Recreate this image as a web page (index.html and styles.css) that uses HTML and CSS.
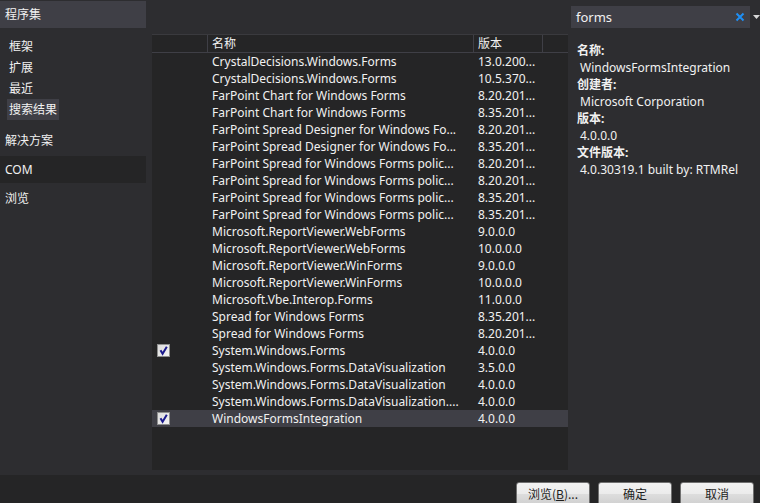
FILE: index.html
```html
<!DOCTYPE html>
<html>
<head>
<meta charset="utf-8">
<link rel="stylesheet" href="styles.css">
</head>
<body>
<div class="app">
  <div class="main">
    <nav class="sidebar">
      <div class="side-head">程序集</div>
      <div class="side-sub">
        <div class="sub-item">框架</div>
        <div class="sub-item">扩展</div>
        <div class="sub-item">最近</div>
        <div class="sub-item active">搜索结果</div>
      </div>
      <div class="side-item">解决方案</div>
      <div class="side-item com">COM</div>
      <div class="side-item">浏览</div>
    </nav>
    <section class="center">
      <div class="list">
        <div class="list-head">
          <div class="c-check"></div>
          <div class="c-name">名称</div>
          <div class="c-ver">版本</div>
          <div class="c-rest"></div>
        </div>
        <div class="rows">
          <div class="row"><div class="c-check"></div><div class="c-name">CrystalDecisions.Windows.Forms</div><div class="c-ver">13.0.200...</div></div>
          <div class="row"><div class="c-check"></div><div class="c-name">CrystalDecisions.Windows.Forms</div><div class="c-ver">10.5.370...</div></div>
          <div class="row"><div class="c-check"></div><div class="c-name">FarPoint Chart for Windows Forms</div><div class="c-ver">8.20.201...</div></div>
          <div class="row"><div class="c-check"></div><div class="c-name">FarPoint Chart for Windows Forms</div><div class="c-ver">8.35.201...</div></div>
          <div class="row"><div class="c-check"></div><div class="c-name">FarPoint Spread Designer for Windows Fo...</div><div class="c-ver">8.20.201...</div></div>
          <div class="row"><div class="c-check"></div><div class="c-name">FarPoint Spread Designer for Windows Fo...</div><div class="c-ver">8.35.201...</div></div>
          <div class="row"><div class="c-check"></div><div class="c-name">FarPoint Spread for Windows Forms polic...</div><div class="c-ver">8.20.201...</div></div>
          <div class="row"><div class="c-check"></div><div class="c-name">FarPoint Spread for Windows Forms polic...</div><div class="c-ver">8.20.201...</div></div>
          <div class="row"><div class="c-check"></div><div class="c-name">FarPoint Spread for Windows Forms polic...</div><div class="c-ver">8.35.201...</div></div>
          <div class="row"><div class="c-check"></div><div class="c-name">FarPoint Spread for Windows Forms polic...</div><div class="c-ver">8.35.201...</div></div>
          <div class="row"><div class="c-check"></div><div class="c-name">Microsoft.ReportViewer.WebForms</div><div class="c-ver">9.0.0.0</div></div>
          <div class="row"><div class="c-check"></div><div class="c-name">Microsoft.ReportViewer.WebForms</div><div class="c-ver">10.0.0.0</div></div>
          <div class="row"><div class="c-check"></div><div class="c-name">Microsoft.ReportViewer.WinForms</div><div class="c-ver">9.0.0.0</div></div>
          <div class="row"><div class="c-check"></div><div class="c-name">Microsoft.ReportViewer.WinForms</div><div class="c-ver">10.0.0.0</div></div>
          <div class="row"><div class="c-check"></div><div class="c-name">Microsoft.Vbe.Interop.Forms</div><div class="c-ver">11.0.0.0</div></div>
          <div class="row"><div class="c-check"></div><div class="c-name">Spread for Windows Forms</div><div class="c-ver">8.35.201...</div></div>
          <div class="row"><div class="c-check"></div><div class="c-name">Spread for Windows Forms</div><div class="c-ver">8.20.201...</div></div>
          <div class="row"><div class="c-check"><span class="cb"><svg viewBox="0 0 13 13" width="13" height="13"><path d="M3.5 6.2 L5.6 9.8 L9.8 2.8" fill="none" stroke="#1a1a8c" stroke-width="2"/></svg></span></div><div class="c-name">System.Windows.Forms</div><div class="c-ver">4.0.0.0</div></div>
          <div class="row"><div class="c-check"></div><div class="c-name">System.Windows.Forms.DataVisualization</div><div class="c-ver">3.5.0.0</div></div>
          <div class="row"><div class="c-check"></div><div class="c-name">System.Windows.Forms.DataVisualization</div><div class="c-ver">4.0.0.0</div></div>
          <div class="row"><div class="c-check"></div><div class="c-name">System.Windows.Forms.DataVisualization....</div><div class="c-ver">4.0.0.0</div></div>
          <div class="row selected"><div class="c-check"><span class="cb"><svg viewBox="0 0 13 13" width="13" height="13"><path d="M3.5 6.2 L5.6 9.8 L9.8 2.8" fill="none" stroke="#1a1a8c" stroke-width="2"/></svg></span></div><div class="c-name">WindowsFormsIntegration</div><div class="c-ver">4.0.0.0</div></div>
        </div>
      </div>
    </section>
    <aside class="details">
      <div class="search">
        <div class="search-box">
          <span class="search-text">forms</span>
          <svg class="clear" viewBox="0 0 10 10" width="10" height="10"><path d="M1.5 1.5 L8.5 8.5 M8.5 1.5 L1.5 8.5" stroke="#1e8ff5" stroke-width="2"/></svg>
        </div>
        <svg class="drop" viewBox="0 0 7 4" width="7" height="4"><path d="M0 0 H7 L3.5 4 Z" fill="#d8d8d8"/></svg>
      </div>
      <dl class="info">
        <dt>名称:</dt>
        <dd>WindowsFormsIntegration</dd>
        <dt>创建者:</dt>
        <dd>Microsoft Corporation</dd>
        <dt>版本:</dt>
        <dd>4.0.0.0</dd>
        <dt>文件版本:</dt>
        <dd>4.0.30319.1 built by: RTMRel</dd>
      </dl>
    </aside>
  </div>
  <footer class="footer">
    <button class="btn">浏览(<u>B</u>)...</button>
    <button class="btn">确定</button>
    <button class="btn">取消</button>
  </footer>
</div>
</body>
</html>
```
FILE: styles.css
```css
* { box-sizing: border-box; }
html, body { margin: 0; padding: 0; }
body {
  width: 760px;
  height: 503px;
  overflow: hidden;
  background: #2d2d30;
  color: #f1f1f1;
  font-family: "Noto Sans", "Noto Sans CJK SC", sans-serif;
  font-size: 12px;
}
.app { display: flex; flex-direction: column; height: 503px; }
.main { display: flex; height: 475px; }

.sidebar { width: 146px; flex: none; padding-top: 1px; }
.side-head {
  height: 27px;
  background: #3f3f46;
  padding-left: 5px;
  line-height: 27px;
}
.side-sub { padding: 8px 0 7px 7px; }
.sub-item {
  height: 21px;
  line-height: 21px;
  padding-left: 2px;
  display: table;
  padding-right: 2px;
}
.sub-item.active { background: #3f3f46; }
.side-item {
  height: 27px;
  line-height: 27px;
  padding-left: 5px;
  margin-bottom: 2px;
}
.side-item.com { background: #252526; }

.center { width: 422px; flex: none; padding: 34px 0 5px 6px; }
.list {
  height: 436px;
  background: #252526;
  border-top: 1px solid #3a3a3e;
}
.list-head {
  display: flex;
  height: 18px;
  border-bottom: 1px solid #3f3f46;
  line-height: 17px;
}
.list-head > div { border-right: 1px solid #3f3f46; }
.c-check { width: 56px; flex: none; display: flex; align-items: center; padding-left: 5px; }
.c-name { width: 266px; flex: none; padding-left: 4px; white-space: nowrap; overflow: hidden; }
.c-ver { width: 69px; flex: none; padding-left: 4px; white-space: nowrap; }
.list-head .c-name { width: 266px; }
.c-rest { width: 25px; border-right: none !important; }
.row { display: flex; height: 17px; line-height: 17px; }
.row.selected { background: #3f3f46; }
.cb {
  width: 13px;
  height: 13px;
  display: block;
  border: 1px solid #8e8f8f;
  background: linear-gradient(135deg, #dcdcdc, #f4f4f4);
  position: relative;
}
.cb svg { position: absolute; left: -1px; top: -1px; }

.details { flex: 1; padding: 6px 0 0 3px; }
.search { display: flex; align-items: center; height: 22px; }
.search-box {
  width: 179px;
  height: 22px;
  background: #3f3f46;
  display: flex;
  align-items: center;
  padding-left: 5px;
  padding-right: 5px;
  font-size: 13px;
}
.search-text { flex: 1; }
.clear { display: block; }
.drop { margin-left: 3px; }
.info { margin: 14px 0 0 6px; line-height: 17px; }
.info dt { font-weight: bold; }
.info dd { margin: 0 0 0 3px; }

.footer {
  height: 28px;
  background: #252526;
  display: flex;
  justify-content: flex-end;
  align-items: flex-start;
  padding: 7px 6px 0 0;
  gap: 8px;
}
.btn {
  width: 74px;
  height: 24px;
  border: 1px solid #707070;
  border-radius: 3px;
  background: linear-gradient(#f2f2f2, #ebebeb 50%, #dddddd 51%, #cfcfcf);
  color: #1e1e1e;
  font-family: "Noto Sans CJK SC", sans-serif;
  font-size: 12px;
  padding: 0;
  line-height: 20px;
}
```
